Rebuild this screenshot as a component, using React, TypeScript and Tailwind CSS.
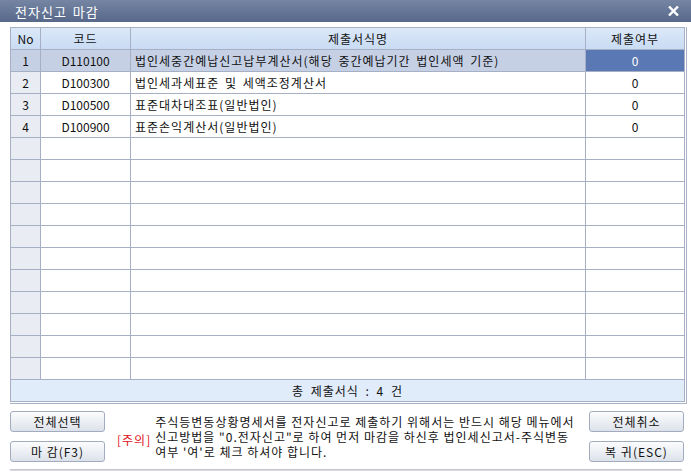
import React from "react";

const FONT = { fontFamily: '"Noto Sans CJK KR", "Noto Sans", sans-serif' };

type Row = { no: string; code: string; name: string; val: string };

const rows: Row[] = [
  { no: "1", code: "D110100", name: "법인세중간예납신고납부계산서(해당 중간예납기간 법인세액 기준)", val: "0" },
  { no: "2", code: "D100300", name: "법인세과세표준 및 세액조정계산서", val: "0" },
  { no: "3", code: "D100500", name: "표준대차대조표(일반법인)", val: "0" },
  { no: "4", code: "D100900", name: "표준손익계산서(일반법인)", val: "0" },
];

function Btn({ label }: { label: string }) {
  return (
    <button className="w-[95px] h-[21px] rounded-[3px] border border-[#a3acbf] bg-gradient-to-b from-[#fbfcfd] to-[#dde2ea] text-[12px] leading-none text-[#111] tracking-[1px] flex items-center justify-center">
      {label}
    </button>
  );
}

export default function App() {
  const empty = Array.from({ length: 11 });
  return (
    <div className="w-[691px] h-[473px] bg-white flex flex-col overflow-hidden text-[#111]" style={FONT}>
      {/* title bar */}
      <div className="h-[22px] shrink-0 bg-gradient-to-b from-[#7585a3] to-[#58688a] flex items-center justify-between pl-[15px] pr-[12px]">
        <span className="text-white text-[13px] leading-none tracking-[1px] [word-spacing:2px]">전자신고 마감</span>
        <svg width="11" height="10" viewBox="0 0 11 10">
          <path d="M1 0.5 L10 9.5 M10 0.5 L1 9.5" stroke="#fff" strokeWidth="2.4" />
        </svg>
      </div>

      <div className="pl-[10px] pt-[5px]">
        <div className="w-[677px] border-r border-b border-[#aab3c6] pr-[1px] pb-[1px]">
          <div className="w-[675px] border-l border-t border-[#a6afc4] text-[12px] leading-none">
            {/* header */}
            <div className="flex h-[22px] bg-gradient-to-b from-[#dbe8f8] to-[#c8dbf3] tracking-[1px]">
              <div className="w-[30px] border-r border-b border-[#a6afc4] flex items-center justify-center tracking-normal">No</div>
              <div className="w-[90px] border-r border-b border-[#a6afc4] flex items-center justify-center">코드</div>
              <div className="w-[455px] border-r border-b border-[#a6afc4] flex items-center justify-center">제출서식명</div>
              <div className="w-[99px] border-r border-b border-[#a6afc4] flex items-center justify-center">제출여부</div>
            </div>
            {rows.map((r, i) => {
              const sel = i === 0;
              return (
                <div key={r.no} className={`flex h-[22px] ${sel ? "bg-[#c6d0e5]" : "bg-white"}`}>
                  <div className={`w-[30px] border-r border-b border-[#a6afc4] flex items-center justify-center ${sel ? "" : "bg-[#e9ecf3]"}`}>{r.no}</div>
                  <div className="w-[90px] border-r border-b border-[#a6afc4] flex items-center justify-center">{r.code}</div>
                  <div className="w-[455px] border-r border-b border-[#a6afc4] flex items-center pl-[4px] whitespace-nowrap tracking-[1px] [word-spacing:2px]">{r.name}</div>
                  <div className={`w-[99px] border-r border-b border-[#a6afc4] flex items-center justify-center ${sel ? "bg-[#5a78b4] text-white" : ""}`}>{r.val}</div>
                </div>
              );
            })}
            {empty.map((_, i) => (
              <div key={i} className="flex h-[22px] bg-white">
                <div className="w-[30px] border-r border-b border-[#a6afc4] bg-[#e9ecf3]" />
                <div className="w-[90px] border-r border-b border-[#a6afc4]" />
                <div className="w-[455px] border-r border-b border-[#a6afc4]" />
                <div className="w-[99px] border-r border-b border-[#a6afc4]" />
              </div>
            ))}
            {/* footer */}
            <div className="h-[22px] border-r border-b border-[#a6afc4] bg-[#e1ecfb] flex items-center justify-center tracking-[1px] [word-spacing:3px]">
              총 제출서식 : 4 건
            </div>
          </div>
        </div>
      </div>

      {/* bottom area */}
      <div className="flex pl-[10px] pt-[7px] h-[62px]">
        <div className="flex flex-col gap-[9px]">
          <Btn label="전체선택" />
          <Btn label="마 감(F3)" />
        </div>
        <div className="flex items-center pl-[12px] w-[484px]">
          <span className="text-[#e0101a] text-[12px] leading-none mr-[4px] pt-[2px] tracking-[1px]">[주의]</span>
          <div className="text-[12px] leading-[15px] whitespace-nowrap self-start mt-[3px] tracking-[1px]">
            <div>주식등변동상황명세서를 전자신고로 제출하기 위해서는 반드시 해당 메뉴에서</div>
            <div>신고방법을 "0.전자신고"로 하여 먼저 마감을 하신후 법인세신고서-주식변동</div>
            <div>여부 '여'로 체크 하셔야 합니다.</div>
          </div>
        </div>
        <div className="flex flex-col gap-[9px]">
          <Btn label="전체취소" />
          <Btn label="복 귀(ESC)" />
        </div>
      </div>
      <div className="mt-[3px] ml-[10px] w-[672px] h-[2px] bg-gradient-to-b from-[#b9bcc2] to-[#e4e6ea]" />
    </div>
  );
}
